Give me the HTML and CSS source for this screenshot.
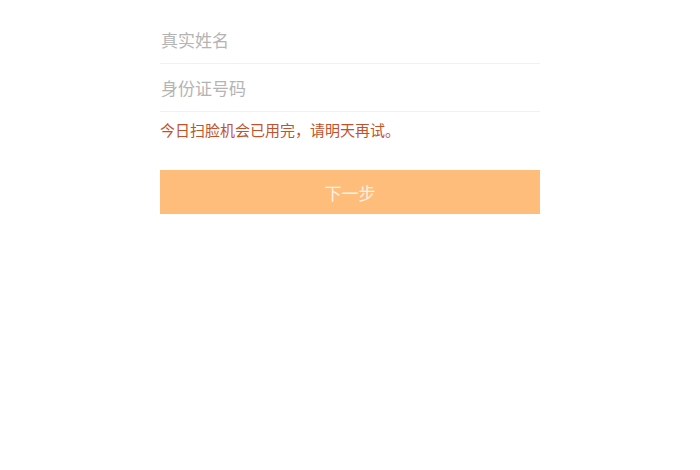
FILE: index.html
```html
<!DOCTYPE html>
<html lang="zh-CN">
<head>
    <meta charset="UTF-8">
    <meta name="viewport" content="width=device-width, initial-scale=1.0">
    <title>实名认证</title>
    <link rel="stylesheet" href="styles.css">
</head>
<body>
    <div class="form">
        <div class="field"><input type="text" placeholder="真实姓名"></div>
        <div class="field"><input type="text" placeholder="身份证号码"></div>
        <p class="error">今日扫脸机会已用完，请明天再试。</p>
        <button class="next">下一步</button>
    </div>
</body>
</html>
```

FILE: styles.css
```css
body {
    margin: 0;
    background-color: #fff;
    font-family: "Noto Sans CJK SC", "Noto Sans", sans-serif;
}
.form {
    width: 380px;
    margin: 0 auto;
    padding-top: 16px;
}
.field {
    height: 47px;
    border-bottom: 1px solid #f1f1f1;
    display: flex;
    align-items: center;
}
.field input {
    border: none;
    outline: none;
    padding: 0 1px;
    width: 100%;
    font-size: 17px;
    font-family: inherit;
    color: #333;
    background: transparent;
}
.field input::placeholder {
    color: #b4b4b4;
}
.error {
    margin: 0;
    height: 36px;
    line-height: 36px;
    font-size: 15px;
    color: #c2522e;
}
.next {
    display: block;
    width: 100%;
    height: 44px;
    margin-top: 22px;
    border: none;
    background-color: #ffbd7b;
    color: #fff3e6;
    font-size: 17px;
    font-family: inherit;
    cursor: pointer;
}
```
